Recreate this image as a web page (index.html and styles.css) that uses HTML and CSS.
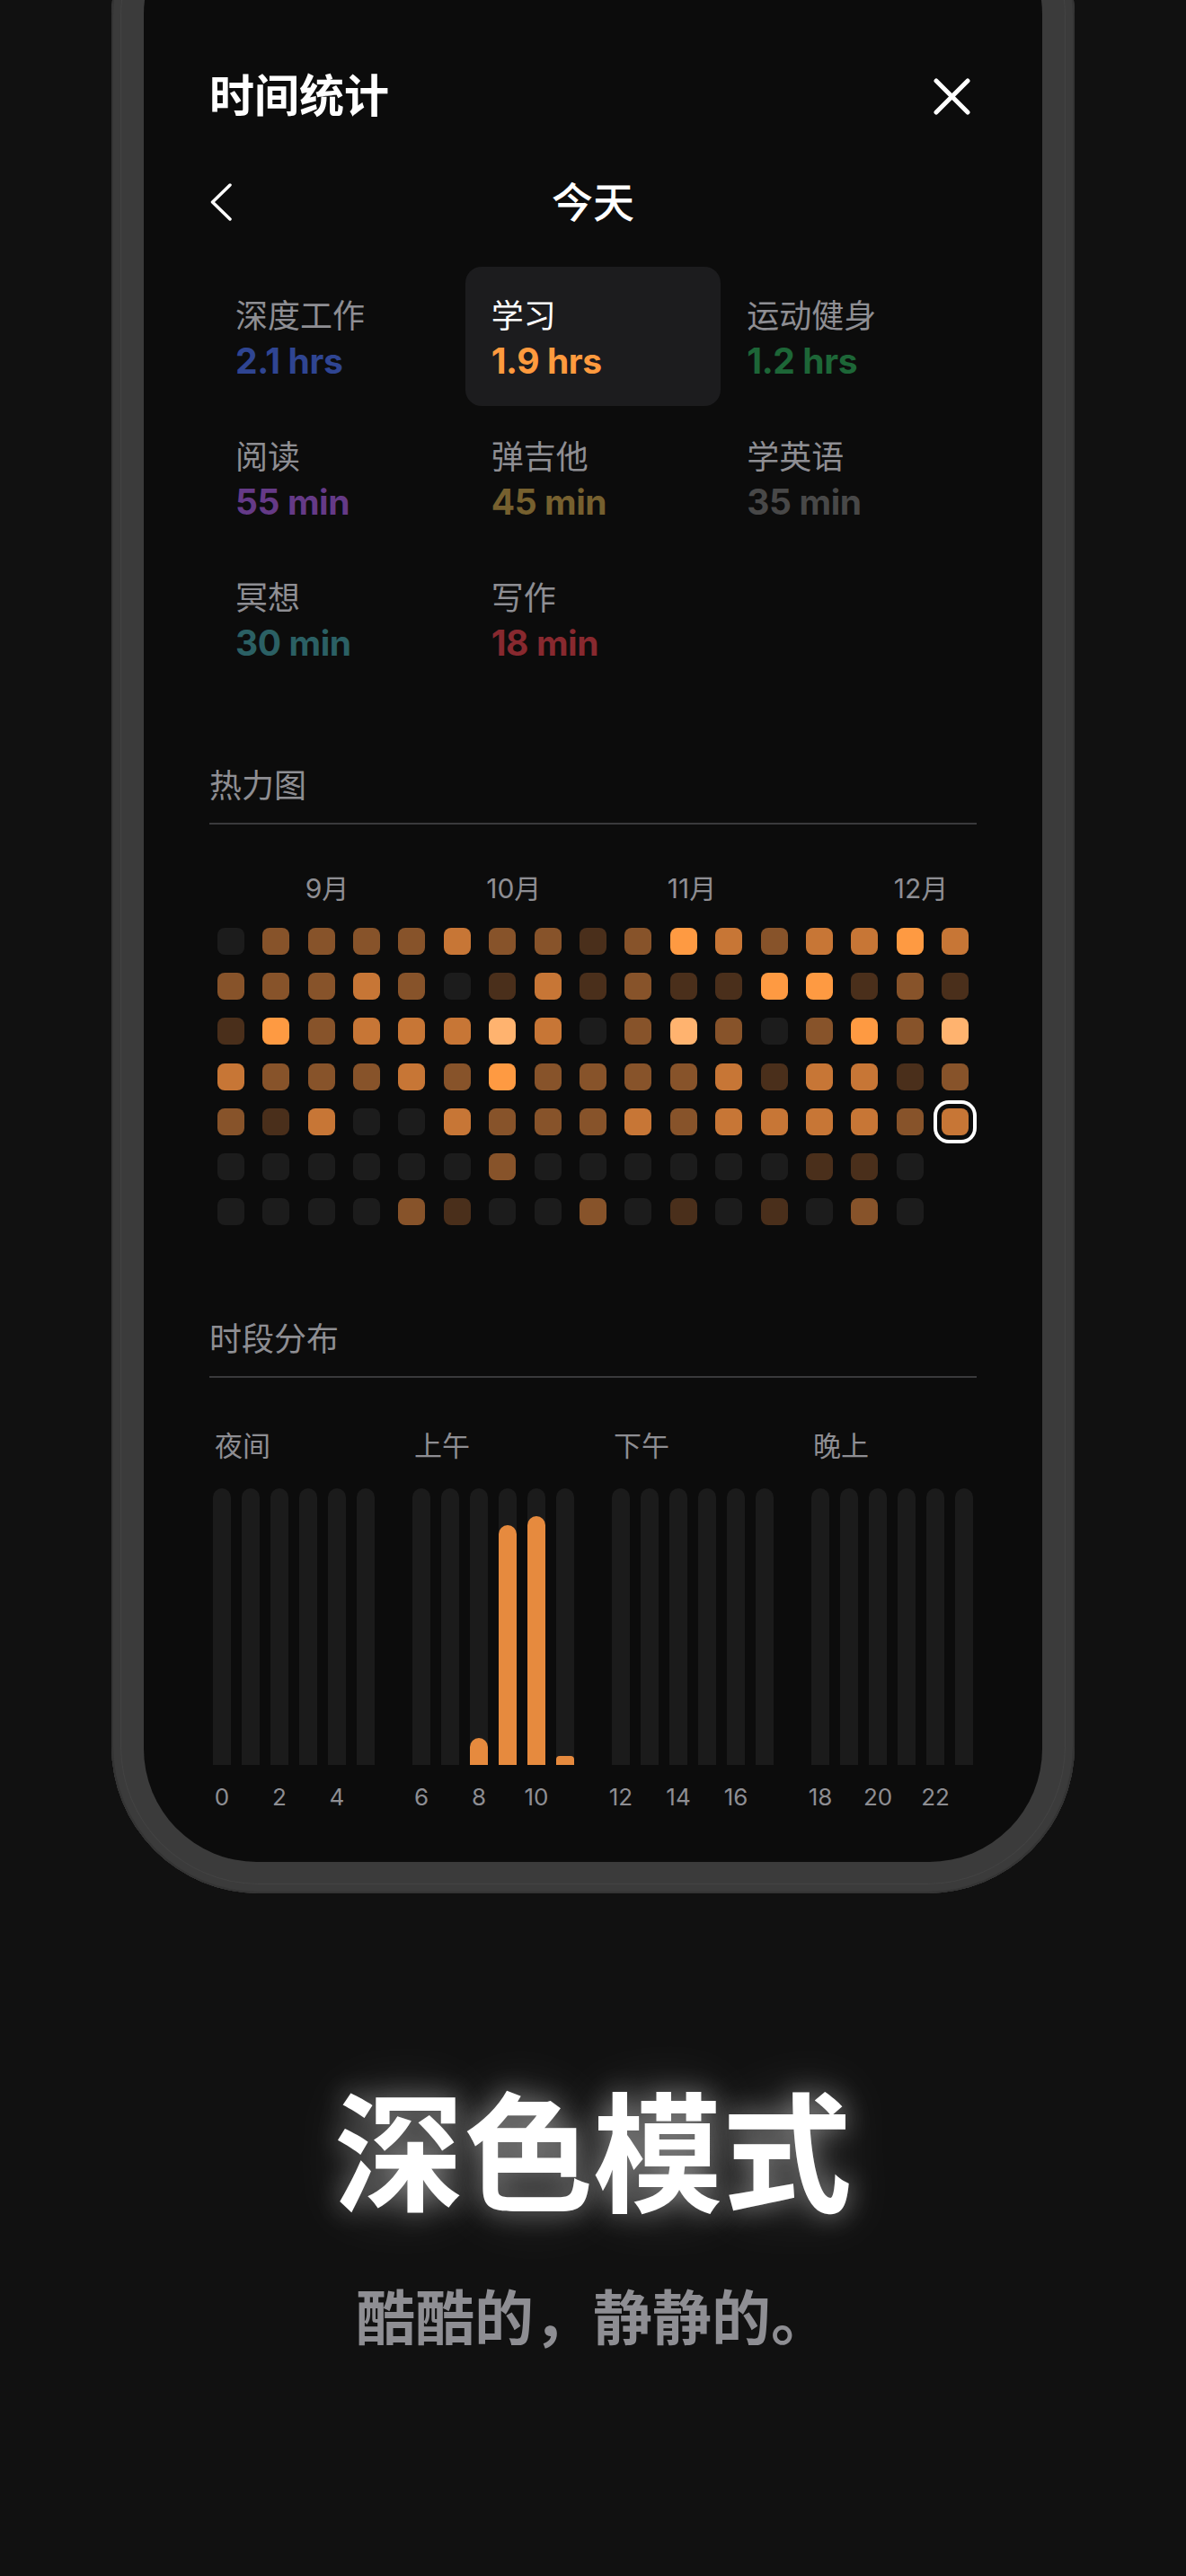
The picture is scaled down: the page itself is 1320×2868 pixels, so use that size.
FILE: index.html
```html
<!DOCTYPE html>
<html lang="zh-CN">
<head>
<meta charset="utf-8">
<title>时间统计 - 深色模式</title>
<link rel="stylesheet" href="styles.css">
</head>
<body>
<div class="phone">
  <span class="side side-l side-1"></span>
  <span class="side side-l side-2"></span>
  <span class="side side-l side-3"></span>
  <span class="side side-r"></span>
  <div class="screen">
    <header class="topbar">
      <h1 class="title">时间统计</h1>
      <svg class="close" width="41" height="41" viewBox="0 0 41 41"><path d="M3 3 L38 38 M38 3 L3 38" stroke="#fff" stroke-width="5" stroke-linecap="round" fill="none"/></svg>
    </header>
    <div class="daynav">
      <svg class="back" width="26" height="42" viewBox="0 0 26 42"><path d="M23 2 L3.5 21 L23 40" stroke="#fff" stroke-width="3.5" stroke-linecap="round" stroke-linejoin="round" fill="none"/></svg>
      <span class="day">今天</span>
      <span></span>
    </div>
    <div class="cats">
      <div class="cat"><div class="cat-name">深度工作</div><div class="cat-val v-blue">2.1 hrs</div></div>
      <div class="cat is-active"><div class="cat-name">学习</div><div class="cat-val v-orange">1.9 hrs</div></div>
      <div class="cat"><div class="cat-name">运动健身</div><div class="cat-val v-green">1.2 hrs</div></div>
      <div class="cat"><div class="cat-name">阅读</div><div class="cat-val v-purple">55 min</div></div>
      <div class="cat"><div class="cat-name">弹吉他</div><div class="cat-val v-gold">45 min</div></div>
      <div class="cat"><div class="cat-name">学英语</div><div class="cat-val v-gray">35 min</div></div>
      <div class="cat"><div class="cat-name">冥想</div><div class="cat-val v-teal">30 min</div></div>
      <div class="cat"><div class="cat-name">写作</div><div class="cat-val v-red">18 min</div></div>
    </div>

    <section class="sec heat">
      <h2 class="sec-title">热力图</h2>
      <div class="months">
        <span class="m m-9">9月</span>
        <span class="m m-10">10月</span>
        <span class="m m-11">11月</span>
        <span class="m m-12">12月</span>
      </div>
      <div class="heat-grid">
        <i class="c l0"></i><i class="c l2"></i><i class="c l2"></i><i class="c l2"></i><i class="c l2"></i><i class="c l3"></i><i class="c l2"></i><i class="c l2"></i><i class="c l1"></i><i class="c l2"></i><i class="c l4"></i><i class="c l3"></i><i class="c l2"></i><i class="c l3"></i><i class="c l3"></i><i class="c l4"></i><i class="c l3"></i>
        <i class="c l2"></i><i class="c l2"></i><i class="c l2"></i><i class="c l3"></i><i class="c l2"></i><i class="c l0"></i><i class="c l1"></i><i class="c l3"></i><i class="c l1"></i><i class="c l2"></i><i class="c l1"></i><i class="c l1"></i><i class="c l4"></i><i class="c l4"></i><i class="c l1"></i><i class="c l2"></i><i class="c l1"></i>
        <i class="c l1"></i><i class="c l4"></i><i class="c l2"></i><i class="c l3"></i><i class="c l3"></i><i class="c l3"></i><i class="c l5"></i><i class="c l3"></i><i class="c l0"></i><i class="c l2"></i><i class="c l5"></i><i class="c l2"></i><i class="c l0"></i><i class="c l2"></i><i class="c l4"></i><i class="c l2"></i><i class="c l5"></i>
        <i class="c l3"></i><i class="c l2"></i><i class="c l2"></i><i class="c l2"></i><i class="c l3"></i><i class="c l2"></i><i class="c l4"></i><i class="c l2"></i><i class="c l2"></i><i class="c l2"></i><i class="c l2"></i><i class="c l3"></i><i class="c l1"></i><i class="c l3"></i><i class="c l3"></i><i class="c l1"></i><i class="c l2"></i>
        <i class="c l2"></i><i class="c l1"></i><i class="c l3"></i><i class="c l0"></i><i class="c l0"></i><i class="c l3"></i><i class="c l2"></i><i class="c l2"></i><i class="c l2"></i><i class="c l3"></i><i class="c l2"></i><i class="c l3"></i><i class="c l3"></i><i class="c l3"></i><i class="c l3"></i><i class="c l2"></i><i class="c l3 today"></i>
        <i class="c l0"></i><i class="c l0"></i><i class="c l0"></i><i class="c l0"></i><i class="c l0"></i><i class="c l0"></i><i class="c l2"></i><i class="c l0"></i><i class="c l0"></i><i class="c l0"></i><i class="c l0"></i><i class="c l0"></i><i class="c l0"></i><i class="c l1"></i><i class="c l1"></i><i class="c l0"></i><i class="c none"></i>
        <i class="c l0"></i><i class="c l0"></i><i class="c l0"></i><i class="c l0"></i><i class="c l2"></i><i class="c l1"></i><i class="c l0"></i><i class="c l0"></i><i class="c l2"></i><i class="c l0"></i><i class="c l1"></i><i class="c l0"></i><i class="c l1"></i><i class="c l0"></i><i class="c l2"></i><i class="c l0"></i><i class="c none"></i>
      </div>
    </section>

    <section class="sec dist">
      <h2 class="sec-title">时段分布</h2>
      <div class="periods">
        <div class="period">
          <div class="period-name">夜间</div>
          <div class="hours">
            <div class="hour"><div class="track"></div><span class="hlabel">0</span></div>
            <div class="hour"><div class="track"></div><span class="hlabel"></span></div>
            <div class="hour"><div class="track"></div><span class="hlabel">2</span></div>
            <div class="hour"><div class="track"></div><span class="hlabel"></span></div>
            <div class="hour"><div class="track"></div><span class="hlabel">4</span></div>
            <div class="hour"><div class="track"></div><span class="hlabel"></span></div>
          </div>
        </div>
        <div class="period">
          <div class="period-name">上午</div>
          <div class="hours">
            <div class="hour"><div class="track"></div><span class="hlabel">6</span></div>
            <div class="hour"><div class="track"></div><span class="hlabel"></span></div>
            <div class="hour"><div class="track"><div class="fill" style="height:30px"></div></div><span class="hlabel">8</span></div>
            <div class="hour"><div class="track"><div class="fill" style="height:267px"></div></div><span class="hlabel"></span></div>
            <div class="hour"><div class="track"><div class="fill" style="height:277px"></div></div><span class="hlabel">10</span></div>
            <div class="hour"><div class="track"><div class="fill fill-small" style="height:10px"></div></div><span class="hlabel"></span></div>
          </div>
        </div>
        <div class="period">
          <div class="period-name">下午</div>
          <div class="hours">
            <div class="hour"><div class="track"></div><span class="hlabel">12</span></div>
            <div class="hour"><div class="track"></div><span class="hlabel"></span></div>
            <div class="hour"><div class="track"></div><span class="hlabel">14</span></div>
            <div class="hour"><div class="track"></div><span class="hlabel"></span></div>
            <div class="hour"><div class="track"></div><span class="hlabel">16</span></div>
            <div class="hour"><div class="track"></div><span class="hlabel"></span></div>
          </div>
        </div>
        <div class="period">
          <div class="period-name">晚上</div>
          <div class="hours">
            <div class="hour"><div class="track"></div><span class="hlabel">18</span></div>
            <div class="hour"><div class="track"></div><span class="hlabel"></span></div>
            <div class="hour"><div class="track"></div><span class="hlabel">20</span></div>
            <div class="hour"><div class="track"></div><span class="hlabel"></span></div>
            <div class="hour"><div class="track"></div><span class="hlabel">22</span></div>
            <div class="hour"><div class="track"></div><span class="hlabel"></span></div>
          </div>
        </div>
      </div>
    </section>
  </div>
</div>

<div class="promo">
  <h2 class="headline">深色模式</h2>
  <p class="sub">酷酷的，静静的。</p>
</div>
</body>
</html>
```

FILE: styles.css
```css
* { box-sizing: border-box; margin: 0; padding: 0; }

html, body { background: #111111; }

body {
  width: 1320px;
  height: 2868px;
  overflow: hidden;
  font-family: "Inter", "Noto Sans CJK SC", sans-serif;
  color: #fff;
}

/* phone frame */
.phone {
  position: relative;
  width: 1072px;
  margin: -146px 0 0 124px;
  padding: 36px 36px 35px;
  background: #3b3b3b;
  border-radius: 164px;
  box-shadow: inset 0 0 0 2px #343434, inset 0 0 0 10px #3b3b3b, inset 0 0 0 11px #434343;
}

.side {
  position: absolute;
  z-index: -1;
  width: 8px;
  background: #303030;
  border-radius: 3px;
}
.side-l { left: -3px; }
.side-r { right: -3px; top: 685px; height: 238px; }
.side-1 { top: 427px; height: 81px; }
.side-2 { top: 579px; height: 153px; }
.side-3 { top: 775px; height: 152px; }

.screen {
  height: 2183px;
  background: #0c0c0c;
  border-radius: 126px;
  padding: 185px 73px 0;
}

/* header */
.topbar {
  display: flex;
  justify-content: space-between;
  align-items: center;
  height: 64px;
}
.title {
  font-size: 50px;
  font-weight: 600;
  line-height: 64px;
}
.close { margin-right: 7px; display: block; }

.daynav {
  display: grid;
  grid-template-columns: 1fr auto 1fr;
  align-items: center;
  height: 64px;
  margin-top: 54px;
}
.back { display: block; }
.day {
  font-size: 46px;
  font-weight: 500;
  line-height: 64px;
}

/* categories */
.cats {
  display: grid;
  grid-template-columns: repeat(3, 1fr);
  row-gap: 2px;
  margin-top: 40px;
}
.cat {
  height: 155px;
  padding: 31px 29px 0;
  border-radius: 18px;
}
.cat.is-active { background: #1c1c1e; }
.cat-name {
  font-size: 36px;
  line-height: 48px;
  color: #8e8e93;
}
.is-active .cat-name { color: #fff; }
.cat-val {
  margin-top: 2px;
  font-size: 39px;
  font-weight: 700;
  line-height: 48px;
  letter-spacing: -0.4px;
}
.v-blue { color: #2f4592; }
.v-orange { color: #ff9a3e; }
.v-green { color: #1d6637; }
.v-purple { color: #653a87; }
.v-gold { color: #76602f; }
.v-gray { color: #484848; }
.v-teal { color: #2b6064; }
.v-red { color: #88292f; }

/* sections */
.sec-title {
  font-size: 36px;
  font-weight: 400;
  line-height: 48px;
  color: #8e8e93;
  padding-bottom: 20px;
  border-bottom: 2px solid #3a3a3c;
}
.heat .sec-title { margin-top: 85px; padding-bottom: 17px; }
.dist .sec-title { margin-top: 103px; padding-bottom: 17px; }

/* heatmap */
.months,
.heat-grid {
  display: grid;
  grid-template-columns: repeat(17, 30px);
  column-gap: 20.4px;
  justify-content: center;
}
.months {
  margin-top: 51px;
  height: 40px;
  font-size: 30px;
  line-height: 40px;
  color: #8e8e93;
}
.m { white-space: nowrap; margin-left: -3px; }
.m-9 { grid-column: 3; }
.m-10 { grid-column: 7; }
.m-11 { grid-column: 11; }
.m-12 { grid-column: 16; }

.heat-grid {
  grid-auto-rows: 30px;
  row-gap: 20.2px;
  margin-top: 24px;
}
.c { display: block; border-radius: 8px; background: #1c1c1c; }
.l0 { background: #1c1c1c; }
.l1 { background: #4a2f1b; }
.l2 { background: #87532a; }
.l3 { background: #c77636; }
.l4 { background: #fe9a42; }
.l5 { background: #ffb36f; }
.none { visibility: hidden; }
.today { box-shadow: 0 0 0 5px #0c0c0c, 0 0 0 9px #fff; }

/* distribution */
.periods {
  display: flex;
  justify-content: center;
  gap: 42px;
  margin-top: 56px;
}
.period { width: 180px; }
.period-name {
  font-size: 31px;
  line-height: 40px;
  color: #8e8e93;
  padding-left: 2px;
}
.hours {
  display: flex;
  gap: 12px;
  margin-top: 27px;
}
.hour {
  width: 20px;
  display: flex;
  flex-direction: column;
  align-items: center;
}
.track {
  width: 20px;
  height: 308px;
  background: #1b1b1b;
  border-radius: 10px 10px 0 0;
  display: flex;
  flex-direction: column;
  justify-content: flex-end;
  overflow: hidden;
}
.fill {
  width: 20px;
  background: #e68a3e;
  border-radius: 10px 10px 0 0;
}
.fill-small { border-radius: 4px 4px 0 0; }
.hlabel {
  height: 34px;
  margin-top: 19px;
  font-size: 26px;
  line-height: 34px;
  color: #8e8e93;
  white-space: nowrap;
}

/* promo */
.promo {
  text-align: center;
  margin-top: 202px;
}
.headline {
  font-size: 144px;
  font-weight: 600;
  line-height: 180px;
  color: #fff;
  text-shadow: 0 0 30px rgba(255, 255, 255, 0.45), 0 0 70px rgba(255, 255, 255, 0.2);
}
.sub {
  margin-top: 51px;
  font-size: 66px;
  font-weight: 600;
  line-height: 80px;
  color: #8e8e93;
}
```
